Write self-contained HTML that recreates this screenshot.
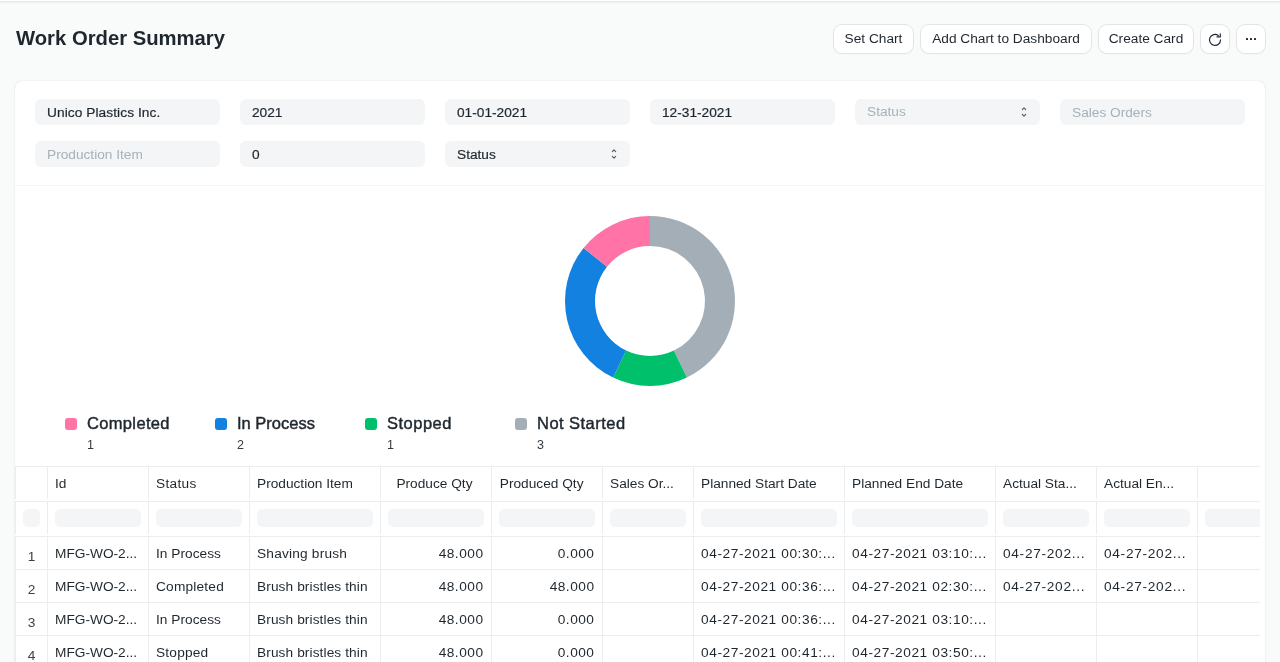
<!DOCTYPE html>
<html><head><meta charset="utf-8">
<style>
*{box-sizing:border-box;margin:0;padding:0}
html,body{width:1280px;height:662px;overflow:hidden}
body{background:#f9fafa;font-family:"Liberation Sans",sans-serif;color:#1f272e;position:relative}
.a{position:absolute;white-space:nowrap;will-change:transform}
.topshadow{left:0;top:0;width:1280px;height:4px;background:linear-gradient(#fff 0,#fff 1px,#e6e8ea 1px,#e6e8ea 2px,#eff1f1 2px,#eff1f1 3px,#f5f6f6 3px,#f5f6f6 4px)}
.title{left:16px;top:23px;font-size:20.25px;font-weight:bold;line-height:30px;color:#1f272e}
.btn{top:25px;height:28px;background:#fff;border-radius:8px;box-shadow:0 0 0 1px #e2e4e6,0 1px 2px rgba(0,0,0,.07);font-size:13.7px;line-height:28px;color:#1f272e;text-align:center}
.card{left:15px;top:81px;width:1250px;height:700px;background:#fff;border-radius:7px;box-shadow:0 0 1px rgba(25,39,52,.22),0 1px 3px rgba(25,39,52,.06)}
.inp{height:26px;background:#f4f5f6;border-radius:6px;font-size:13.7px;line-height:27px;padding-left:12px;color:#1f272e;-webkit-text-stroke:0.2px #1f272e}
.ph{color:#a6b1b9;-webkit-text-stroke:0}
.sep{left:15px;width:1250px;height:1px;background:#f1f3f4}
.leg{font-size:16.5px;color:#1f272e;-webkit-text-stroke:0.45px #1f272e;line-height:20px}
.dot{width:12px;height:12px;border-radius:3px}
.legn{font-size:12.5px;color:#313b44;line-height:14px}
.hl{height:1px;background:#ebeef0}
.vl{width:1px;background:#ebeef0}
.cell{font-size:13.7px;line-height:20px;color:#1f272e;overflow:hidden}
.rix{color:#3a434c}
.fin{height:18px;background:#f4f5f6;border-radius:5px}
</style></head>
<body>
<div class="a topshadow"></div>
<div class="a title">Work Order Summary</div>
<div class="a btn" style="left:834px;width:79px">Set Chart</div>
<div class="a btn" style="left:921px;width:170px">Add Chart to Dashboard</div>
<div class="a btn" style="left:1099px;width:94px">Create Card</div>
<div class="a btn" style="left:1201px;width:28px"></div>
<div class="a btn" style="left:1237px;width:28px"></div>
<svg class="a" style="left:1207px;top:31.5px" width="16" height="16" viewBox="0 0 16 16"><path d="M13.5 7.9A5.5 5.5 0 1 1 11.3 3.5" fill="none" stroke="#1f272e" stroke-width="1.15" stroke-linecap="round"/><path d="M13.3 1.7V4.9H10.0" fill="none" stroke="#1f272e" stroke-width="1.15" stroke-linecap="round" stroke-linejoin="round"/></svg>
<div class="a" style="left:1246px;top:38px;width:2.2px;height:2.2px;border-radius:.5px;background:#1f272e"></div>
<div class="a" style="left:1250px;top:38px;width:2.2px;height:2.2px;border-radius:.5px;background:#1f272e"></div>
<div class="a" style="left:1254px;top:38px;width:2.2px;height:2.2px;border-radius:.5px;background:#1f272e"></div>
<div class="a card"></div>
<div class="a inp" style="left:35px;top:99px;width:185px;letter-spacing:0.08px;">Unico Plastics Inc.</div>
<div class="a inp" style="left:240px;top:99px;width:185px;">2021</div>
<div class="a inp" style="left:445px;top:99px;width:185px;">01-01-2021</div>
<div class="a inp" style="left:650px;top:99px;width:185px;">12-31-2021</div>
<div class="a inp ph" style="left:855px;top:99px;width:185px;line-height:25.5px;">Status</div>
<div class="a inp ph" style="left:1060px;top:99px;width:185px;">Sales Orders</div>
<div class="a inp ph" style="left:35px;top:141px;width:185px;">Production Item</div>
<div class="a inp" style="left:240px;top:141px;width:185px;">0</div>
<div class="a inp" style="left:445px;top:141px;width:185px;">Status</div>
<svg class="a" style="left:1018px;top:104px" width="12" height="16" viewBox="-6 -8 12 16"><path d="M-1.7 -2.4L0 -4.2L1.7 -2.4M-1.7 2.4L0 4.2L1.7 2.4" fill="none" stroke="#525c66" stroke-width="1.1" stroke-linecap="round" stroke-linejoin="round"/></svg>
<svg class="a" style="left:608px;top:146px" width="12" height="16" viewBox="-6 -8 12 16"><path d="M-1.7 -2.4L0 -4.2L1.7 -2.4M-1.7 2.4L0 4.2L1.7 2.4" fill="none" stroke="#525c66" stroke-width="1.1" stroke-linecap="round" stroke-linejoin="round"/></svg>
<div class="a sep" style="top:185px"></div>
<svg class="a" style="left:0;top:0" width="1280" height="662"><path fill="#a3aeb7" d="M650.00 216.00A85 85 0 0 1 686.88 377.58L673.86 350.55A55 55 0 0 0 650.00 246.00Z"/><path fill="#00c06b" d="M686.88 377.58A85 85 0 0 1 613.12 377.58L626.14 350.55A55 55 0 0 0 673.86 350.55Z"/><path fill="#1381e0" d="M613.12 377.58A85 85 0 0 1 583.54 248.00L607.00 266.71A55 55 0 0 0 626.14 350.55Z"/><path fill="#ff73a7" d="M583.54 248.00A85 85 0 0 1 650.00 216.00L650.00 246.00A55 55 0 0 0 607.00 266.71Z"/></svg>
<div class="a dot" style="left:65px;top:418px;background:#ff73a7"></div>
<div class="a leg" style="left:87px;top:413px;letter-spacing:0.34px">Completed</div>
<div class="a legn" style="left:87px;top:438px">1</div>
<div class="a dot" style="left:215px;top:418px;background:#1381e0"></div>
<div class="a leg" style="left:237px;top:413px;letter-spacing:0px">In Process</div>
<div class="a legn" style="left:237px;top:438px">2</div>
<div class="a dot" style="left:365px;top:418px;background:#00c06b"></div>
<div class="a leg" style="left:387px;top:413px;letter-spacing:0.5px">Stopped</div>
<div class="a legn" style="left:387px;top:438px">1</div>
<div class="a dot" style="left:515px;top:418px;background:#a3aeb7"></div>
<div class="a leg" style="left:537px;top:413px;letter-spacing:0.46px">Not Started</div>
<div class="a legn" style="left:537px;top:438px">3</div>
<div class="a" style="left:15px;top:466px;width:1245px;height:196px;overflow:hidden">
<div class="a hl" style="left:0;top:0px;width:1245px"></div><div class="a hl" style="left:0;top:35px;width:1245px"></div><div class="a hl" style="left:0;top:70px;width:1245px"></div><div class="a hl" style="left:0;top:103px;width:1245px"></div><div class="a hl" style="left:0;top:136px;width:1245px"></div><div class="a hl" style="left:0;top:169px;width:1245px"></div><div class="a hl" style="left:0;top:202px;width:1245px"></div><div class="a vl" style="left:0px;top:0;height:33px"></div><div class="a vl" style="left:0px;top:35px;height:33px"></div><div class="a vl" style="left:0px;top:70px;height:130px"></div><div class="a vl" style="left:32px;top:0;height:33px"></div><div class="a vl" style="left:32px;top:35px;height:33px"></div><div class="a vl" style="left:32px;top:70px;height:130px"></div><div class="a vl" style="left:133px;top:0;height:33px"></div><div class="a vl" style="left:133px;top:35px;height:33px"></div><div class="a vl" style="left:133px;top:70px;height:130px"></div><div class="a vl" style="left:234px;top:0;height:33px"></div><div class="a vl" style="left:234px;top:35px;height:33px"></div><div class="a vl" style="left:234px;top:70px;height:130px"></div><div class="a vl" style="left:365px;top:0;height:33px"></div><div class="a vl" style="left:365px;top:35px;height:33px"></div><div class="a vl" style="left:365px;top:70px;height:130px"></div><div class="a vl" style="left:476px;top:0;height:33px"></div><div class="a vl" style="left:476px;top:35px;height:33px"></div><div class="a vl" style="left:476px;top:70px;height:130px"></div><div class="a vl" style="left:587px;top:0;height:33px"></div><div class="a vl" style="left:587px;top:35px;height:33px"></div><div class="a vl" style="left:587px;top:70px;height:130px"></div><div class="a vl" style="left:678px;top:0;height:33px"></div><div class="a vl" style="left:678px;top:35px;height:33px"></div><div class="a vl" style="left:678px;top:70px;height:130px"></div><div class="a vl" style="left:829px;top:0;height:33px"></div><div class="a vl" style="left:829px;top:35px;height:33px"></div><div class="a vl" style="left:829px;top:70px;height:130px"></div><div class="a vl" style="left:980px;top:0;height:33px"></div><div class="a vl" style="left:980px;top:35px;height:33px"></div><div class="a vl" style="left:980px;top:70px;height:130px"></div><div class="a vl" style="left:1081px;top:0;height:33px"></div><div class="a vl" style="left:1081px;top:35px;height:33px"></div><div class="a vl" style="left:1081px;top:70px;height:130px"></div><div class="a vl" style="left:1182px;top:0;height:33px"></div><div class="a vl" style="left:1182px;top:35px;height:33px"></div><div class="a vl" style="left:1182px;top:70px;height:130px"></div><div class="a vl" style="left:1283px;top:0;height:33px"></div><div class="a vl" style="left:1283px;top:35px;height:33px"></div><div class="a vl" style="left:1283px;top:70px;height:130px"></div><div class="a cell" style="left:40px;top:7.699999999999989px;letter-spacing:0px">Id</div><div class="a cell" style="left:141px;top:7.699999999999989px;letter-spacing:0.3px">Status</div><div class="a cell" style="left:242px;top:7.699999999999989px;letter-spacing:0px">Production Item</div><div class="a cell" style="left:366px;top:7.699999999999989px;width:91.5px;text-align:right">Produce Qty</div><div class="a cell" style="left:477px;top:7.699999999999989px;width:91.5px;text-align:right">Produced Qty</div><div class="a cell" style="left:595px;top:7.699999999999989px;letter-spacing:0px">Sales Or...</div><div class="a cell" style="left:686px;top:7.699999999999989px;letter-spacing:0px">Planned Start Date</div><div class="a cell" style="left:837px;top:7.699999999999989px;letter-spacing:0px">Planned End Date</div><div class="a cell" style="left:988px;top:7.699999999999989px;letter-spacing:0px">Actual Sta...</div><div class="a cell" style="left:1089px;top:7.699999999999989px;letter-spacing:0px">Actual En...</div><div class="a fin" style="left:8px;top:43px;width:17px"></div><div class="a fin" style="left:40px;top:43px;width:86px"></div><div class="a fin" style="left:141px;top:43px;width:86px"></div><div class="a fin" style="left:242px;top:43px;width:116px"></div><div class="a fin" style="left:373px;top:43px;width:96px"></div><div class="a fin" style="left:484px;top:43px;width:96px"></div><div class="a fin" style="left:595px;top:43px;width:76px"></div><div class="a fin" style="left:686px;top:43px;width:136px"></div><div class="a fin" style="left:837px;top:43px;width:136px"></div><div class="a fin" style="left:988px;top:43px;width:86px"></div><div class="a fin" style="left:1089px;top:43px;width:86px"></div><div class="a fin" style="left:1190px;top:43px;width:86px"></div><div class="a cell rix" style="left:1px;top:80.5px;width:31px;text-align:center">1</div><div class="a cell" style="left:40px;top:78px;letter-spacing:0px">MFG-WO-2...</div><div class="a cell" style="left:141px;top:78px;letter-spacing:0.02px">In Process</div><div class="a cell" style="left:242px;top:78px;letter-spacing:0.2px">Shaving brush</div><div class="a cell" style="left:366px;top:78px;width:102.5px;text-align:right;letter-spacing:0.5px">48.000</div><div class="a cell" style="left:477px;top:78px;width:102.5px;text-align:right;letter-spacing:0.5px">0.000</div><div class="a cell" style="left:686px;top:78px;letter-spacing:0.58px">04-27-2021 00:30:...</div><div class="a cell" style="left:837px;top:78px;letter-spacing:0.58px">04-27-2021 03:10:...</div><div class="a cell" style="left:988px;top:78px;letter-spacing:0.7px">04-27-202...</div><div class="a cell" style="left:1089px;top:78px;letter-spacing:0.7px">04-27-202...</div><div class="a cell rix" style="left:1px;top:113.5px;width:31px;text-align:center">2</div><div class="a cell" style="left:40px;top:111px;letter-spacing:0px">MFG-WO-2...</div><div class="a cell" style="left:141px;top:111px;letter-spacing:0.2px">Completed</div><div class="a cell" style="left:242px;top:111px;letter-spacing:0.1px">Brush bristles thin</div><div class="a cell" style="left:366px;top:111px;width:102.5px;text-align:right;letter-spacing:0.5px">48.000</div><div class="a cell" style="left:477px;top:111px;width:102.5px;text-align:right;letter-spacing:0.5px">48.000</div><div class="a cell" style="left:686px;top:111px;letter-spacing:0.58px">04-27-2021 00:36:...</div><div class="a cell" style="left:837px;top:111px;letter-spacing:0.58px">04-27-2021 02:30:...</div><div class="a cell" style="left:988px;top:111px;letter-spacing:0.7px">04-27-202...</div><div class="a cell" style="left:1089px;top:111px;letter-spacing:0.7px">04-27-202...</div><div class="a cell rix" style="left:1px;top:146.5px;width:31px;text-align:center">3</div><div class="a cell" style="left:40px;top:144px;letter-spacing:0px">MFG-WO-2...</div><div class="a cell" style="left:141px;top:144px;letter-spacing:0.02px">In Process</div><div class="a cell" style="left:242px;top:144px;letter-spacing:0.1px">Brush bristles thin</div><div class="a cell" style="left:366px;top:144px;width:102.5px;text-align:right;letter-spacing:0.5px">48.000</div><div class="a cell" style="left:477px;top:144px;width:102.5px;text-align:right;letter-spacing:0.5px">0.000</div><div class="a cell" style="left:686px;top:144px;letter-spacing:0.58px">04-27-2021 00:36:...</div><div class="a cell" style="left:837px;top:144px;letter-spacing:0.58px">04-27-2021 03:10:...</div><div class="a cell rix" style="left:1px;top:179.5px;width:31px;text-align:center">4</div><div class="a cell" style="left:40px;top:177px;letter-spacing:0px">MFG-WO-2...</div><div class="a cell" style="left:141px;top:177px;letter-spacing:0.2px">Stopped</div><div class="a cell" style="left:242px;top:177px;letter-spacing:0.1px">Brush bristles thin</div><div class="a cell" style="left:366px;top:177px;width:102.5px;text-align:right;letter-spacing:0.5px">48.000</div><div class="a cell" style="left:477px;top:177px;width:102.5px;text-align:right;letter-spacing:0.5px">0.000</div><div class="a cell" style="left:686px;top:177px;letter-spacing:0.58px">04-27-2021 00:41:...</div><div class="a cell" style="left:837px;top:177px;letter-spacing:0.58px">04-27-2021 03:50:...</div>
</div>
</body></html>
